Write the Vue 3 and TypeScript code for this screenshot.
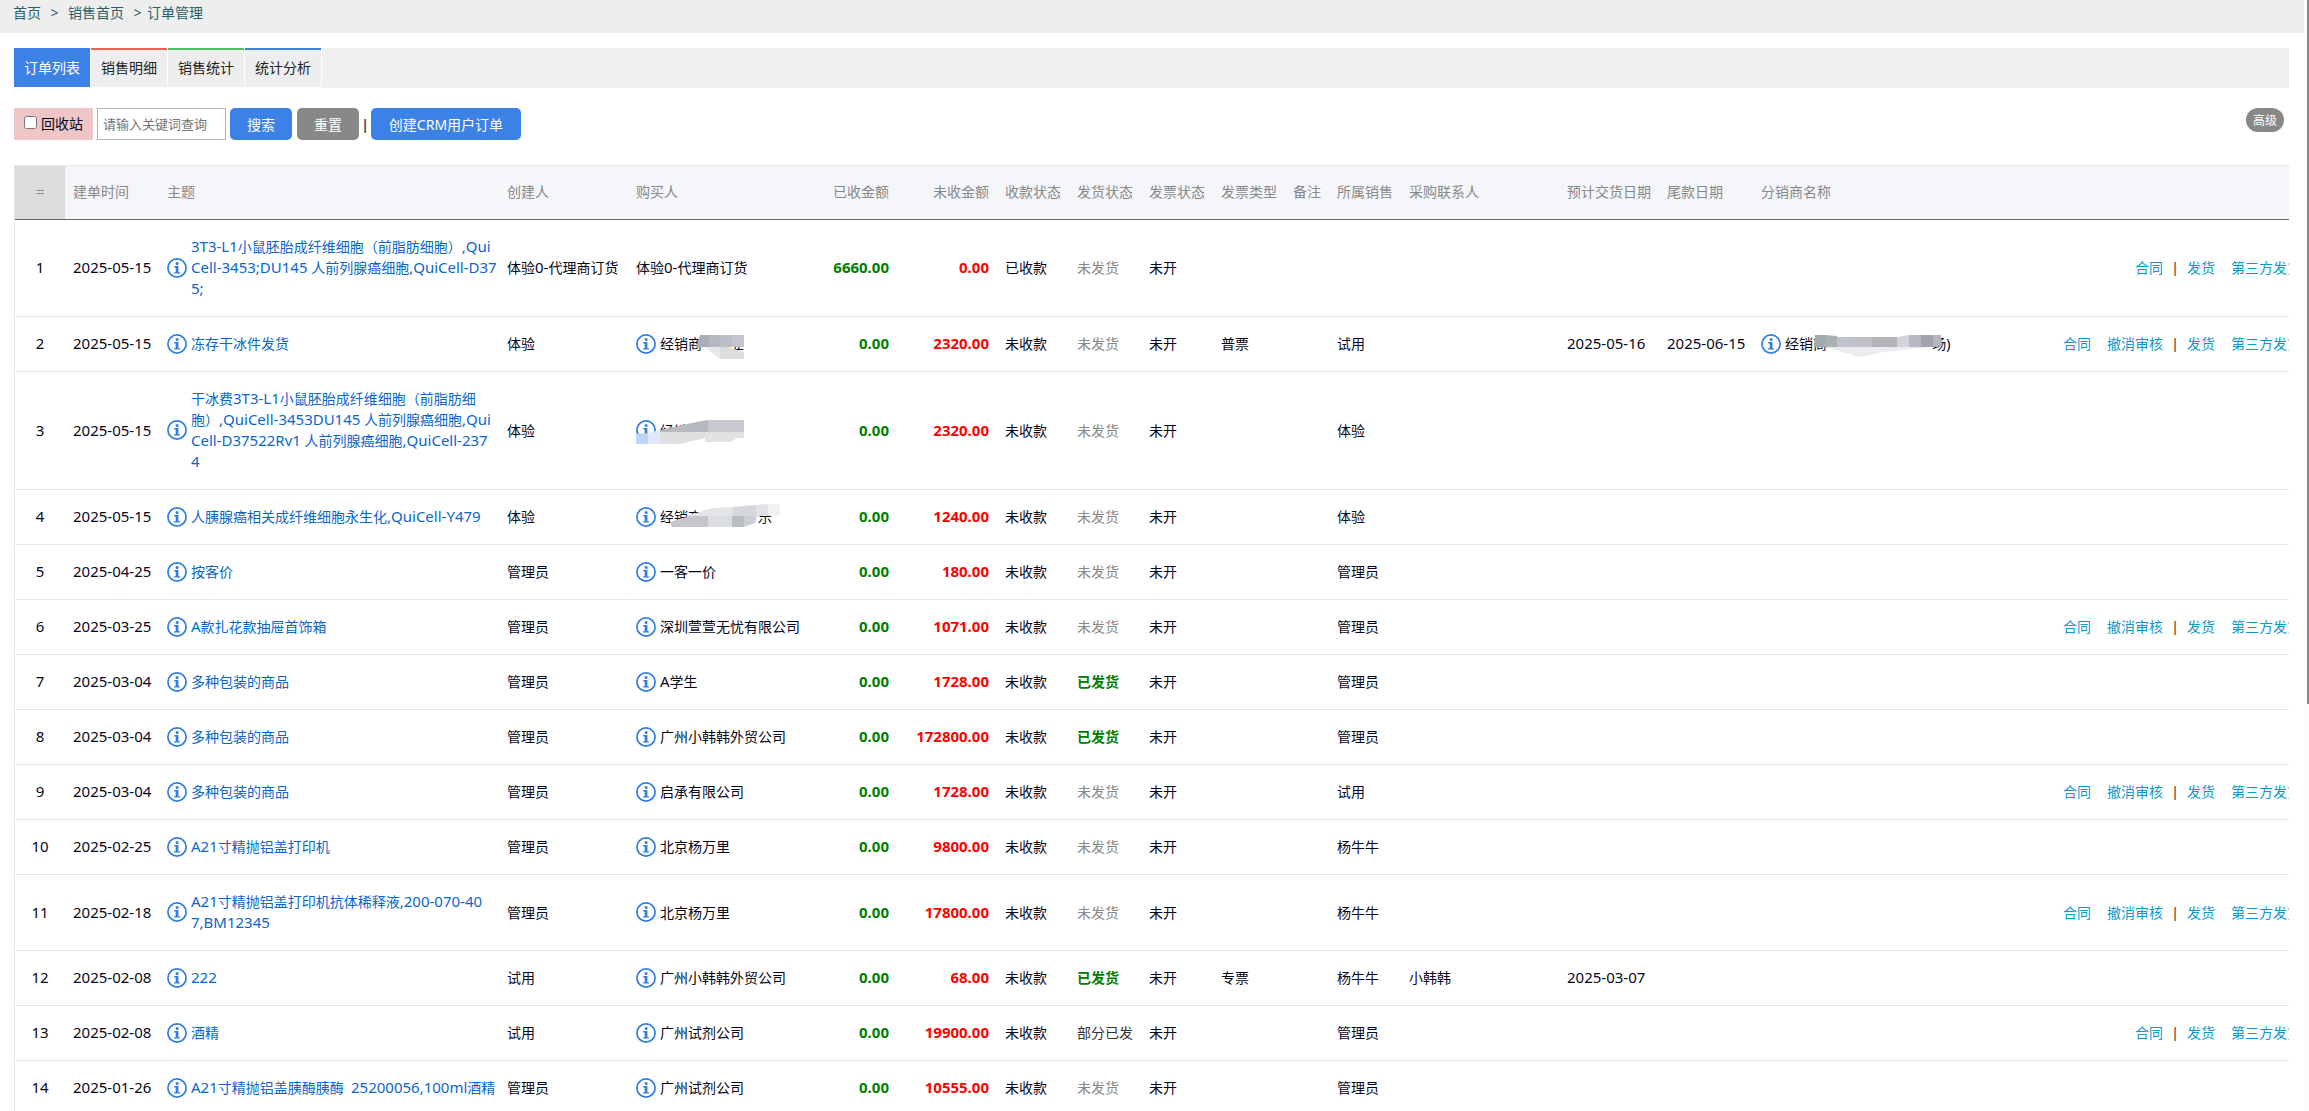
<script setup lang="ts">
import { defineComponent, h, ref } from 'vue'

interface Shape {
  points: string
  fill: string
}

interface Party {
  name: string
  info: boolean
  mask?: Shape[]
}

interface Order {
  date: string
  subject: string
  creator: string
  buyer: Party
  paid: string
  unpaid: string
  payState: string
  shipState: string
  invoiceType?: string
  sales?: string
  contact?: string
  delivery?: string
  balance?: string
  dealer?: Party
  actions?: string[]
}

const keyword = ref('')
const recycled = ref(false)

const tabs = [
  { label: '订单列表', tone: 'active' },
  { label: '销售明细', tone: 'red' },
  { label: '销售统计', tone: 'green' },
  { label: '统计分析', tone: 'blue' },
]

const columns = [
  { key: 'index', label: '=' },
  { key: 'date', label: '建单时间' },
  { key: 'subject', label: '主题' },
  { key: 'creator', label: '创建人' },
  { key: 'buyer', label: '购买人' },
  { key: 'money', label: '已收金额' },
  { key: 'money', label: '未收金额' },
  { key: 'state', label: '收款状态' },
  { key: 'state', label: '发货状态' },
  { key: 'state', label: '发票状态' },
  { key: 'state', label: '发票类型' },
  { key: 'note', label: '备注' },
  { key: 'state', label: '所属销售' },
  { key: 'contact', label: '采购联系人' },
  { key: 'delivery', label: '预计交货日期' },
  { key: 'date', label: '尾款日期' },
  { key: 'dealer', label: '分销商名称' },
  { key: 'actions', label: '' },
]

const short = ['合同', '|', '发货', '第三方发货']
const full = ['合同', '撤消审核', '|', '发货', '第三方发货']

const party = (name: string, mask?: Shape[]): Party => ({ name, info: true, mask })

const buyerMask2: Shape[] = [
  { points: '64,2 73,2 73,14 60,14', fill: '#a9aeb8' },
  { points: '73,2 84,2 84,14 73,14', fill: '#b6b8c0' },
  { points: '84,2 96,2 96,14 84,14', fill: '#bcbec6' },
  { points: '96,2 108,2 108,14 96,14', fill: '#c5c6cd' },
  { points: '69,14 84,14 84,26', fill: '#e8e8ea' },
  { points: '84,14 92,14 108,19 108,26 84,26', fill: '#dcdddf' },
]
const buyerMask3: Shape[] = [
  { points: '0,14 12,13 12,24 0,24', fill: '#bcd5f7' },
  { points: '12,13 24,10 24,24 12,24', fill: '#dde9fa' },
  { points: '24,10 60,2 60,12 24,12', fill: '#b9bac0' },
  { points: '60,2 72,0 72,12 60,12', fill: '#b3b8c1' },
  { points: '72,0 108,0 108,12 72,12', fill: '#c9cad0' },
  { points: '24,12 72,12 69,18 44,24 24,24', fill: '#dfdfe2' },
  { points: '69,12 108,12 108,18 101,18 94,22 69,22', fill: '#e2e2e5' },
]
const buyerMask4: Shape[] = [
  { points: '50,10 77,2 97,1 97,10', fill: '#e4e5e8' },
  { points: '97,1 120,-1 120,10 97,10', fill: '#d5d7db' },
  { points: '120,-1 132,-2 132,10 120,10', fill: '#e1e2e5' },
  { points: '132,-2 144,-2 144,10 132,10', fill: '#f2f2f4' },
  { points: '34,16 54,10 72,10 72,21 36,21', fill: '#c5c6cb' },
  { points: '72,10 96,10 96,21 72,21', fill: '#dcdde0' },
  { points: '96,10 108,10 108,21 96,21', fill: '#b8bcc4' },
  { points: '108,10 121,10 119,17 108,21', fill: '#cdced3' },
]
const dealerMask: Shape[] = [
  { points: '54,2 64,2 64,14 53,14', fill: '#a5a8ac' },
  { points: '64,2 76,3 76,14 64,14', fill: '#adb0b3' },
  { points: '76,4 88,4 88,14 76,14', fill: '#bfc4cd' },
  { points: '88,4 111,4 111,14 88,14', fill: '#bfc0c7' },
  { points: '111,4 136,4 136,14 111,14', fill: '#b2b3b8' },
  { points: '136,4 148,2 148,14 136,14', fill: '#d3d4d8' },
  { points: '148,2 160,2 160,14 148,14', fill: '#b5b8c1' },
  { points: '160,2 172,2 172,14 160,14', fill: '#a1a4ad' },
  { points: '172,2 180,2 181,12 176,14 172,14', fill: '#b5b6ba' },
  { points: '64,14 169,14 123,19 101,24 94,23 79,18', fill: '#ececee' },
]

const orders: Order[] = [
  { date: '2025-05-15', subject: '3T3-L1小鼠胚胎成纤维细胞（前脂肪细胞）,Qui\nCell-3453;DU145 人前列腺癌细胞,QuiCell-D37\n5;', creator: '体验0-代理商订货', buyer: { name: '体验0-代理商订货', info: false }, paid: '6660.00', unpaid: '0.00', payState: '已收款', shipState: '未发货', actions: short },
  { date: '2025-05-15', subject: '冻存干冰件发货', creator: '体验', buyer: party('经销商\u3000\u3000业', buyerMask2), paid: '0.00', unpaid: '2320.00', payState: '未收款', shipState: '未发货', invoiceType: '普票', sales: '试用', delivery: '2025-05-16', balance: '2025-06-15', dealer: party('经销商\u3000\u3000\u3000\u3000\u3000\u3000\u3000  场)', dealerMask), actions: full },
  { date: '2025-05-15', subject: '干冰费3T3-L1小鼠胚胎成纤维细胞（前脂肪细\n胞）,QuiCell-3453DU145 人前列腺癌细胞,Qui\nCell-D37522Rv1 人前列腺癌细胞,QuiCell-237\n4', creator: '体验', buyer: party('经销', buyerMask3), paid: '0.00', unpaid: '2320.00', payState: '未收款', shipState: '未发货', sales: '体验' },
  { date: '2025-05-15', subject: '人胰腺癌相关成纤维细胞永生化,QuiCell-Y479', creator: '体验', buyer: party('经销商长\u3000\u3000\u3000乐', buyerMask4), paid: '0.00', unpaid: '1240.00', payState: '未收款', shipState: '未发货', sales: '体验' },
  { date: '2025-04-25', subject: '按客价', creator: '管理员', buyer: party('一客一价'), paid: '0.00', unpaid: '180.00', payState: '未收款', shipState: '未发货', sales: '管理员' },
  { date: '2025-03-25', subject: 'A款扎花款抽屉首饰箱', creator: '管理员', buyer: party('深圳萱萱无忧有限公司'), paid: '0.00', unpaid: '1071.00', payState: '未收款', shipState: '未发货', sales: '管理员', actions: full },
  { date: '2025-03-04', subject: '多种包装的商品', creator: '管理员', buyer: party('A学生'), paid: '0.00', unpaid: '1728.00', payState: '未收款', shipState: '已发货', sales: '管理员' },
  { date: '2025-03-04', subject: '多种包装的商品', creator: '管理员', buyer: party('广州小韩韩外贸公司'), paid: '0.00', unpaid: '172800.00', payState: '未收款', shipState: '已发货', sales: '管理员' },
  { date: '2025-03-04', subject: '多种包装的商品', creator: '管理员', buyer: party('启承有限公司'), paid: '0.00', unpaid: '1728.00', payState: '未收款', shipState: '未发货', sales: '试用', actions: full },
  { date: '2025-02-25', subject: 'A21寸精抛铝盖打印机', creator: '管理员', buyer: party('北京杨万里'), paid: '0.00', unpaid: '9800.00', payState: '未收款', shipState: '未发货', sales: '杨牛牛' },
  { date: '2025-02-18', subject: 'A21寸精抛铝盖打印机抗体稀释液,200-070-40\n7,BM12345', creator: '管理员', buyer: party('北京杨万里'), paid: '0.00', unpaid: '17800.00', payState: '未收款', shipState: '未发货', sales: '杨牛牛', actions: full },
  { date: '2025-02-08', subject: '222', creator: '试用', buyer: party('广州小韩韩外贸公司'), paid: '0.00', unpaid: '68.00', payState: '未收款', shipState: '已发货', invoiceType: '专票', sales: '杨牛牛', contact: '小韩韩', delivery: '2025-03-07' },
  { date: '2025-02-08', subject: '酒精', creator: '试用', buyer: party('广州试剂公司'), paid: '0.00', unpaid: '19900.00', payState: '未收款', shipState: '部分已发', sales: '管理员', actions: short },
  { date: '2025-01-26', subject: 'A21寸精抛铝盖胰酶胰酶  25200056,100ml酒精', creator: '管理员', buyer: party('广州试剂公司'), paid: '0.00', unpaid: '10555.00', payState: '未收款', shipState: '未发货', sales: '管理员' },
]

const shipTone: Record<string, string> = { 未发货: 'muted', 已发货: 'shipped', 部分已发: 'partial' }

// Latin runs are set one pixel larger than the Chinese text around them.
const splitRuns = (text: string) =>
  text.split(/([A-Za-z0-9\-,;.]+)/).filter(Boolean).map((run) => ({
    run,
    latin: /^[A-Za-z0-9\-,;.]+$/.test(run),
  }))

const InfoIcon = defineComponent({
  render: () =>
    h('svg', { width: 20, height: 20, viewBox: '0 0 20 20', 'aria-hidden': 'true' }, [
      h('circle', { cx: 10, cy: 10, r: 9.1, fill: 'none', stroke: '#2f7de1', 'stroke-width': 1.7 }),
      h('circle', { cx: 10.1, cy: 5.4, r: 1.5, fill: '#2f7de1' }),
      h('path', { d: 'M7.2 8.1h4.2v6.2h1.5v1.3H7.1v-1.3h1.6V9.4H7.2z', fill: '#2f7de1' }),
    ]),
})
</script>

<template>
  <div class="page">
    <nav class="crumbs" aria-label="breadcrumb">
      <a href="#">首页</a><i>&gt;</i><a href="#">销售首页</a><i class="last">&gt;</i><a href="#">订单管理</a>
    </nav>

    <main class="content">
      <nav class="tabs">
        <a v-for="tab in tabs" :key="tab.label" href="#" class="tab" :class="tab.tone">{{ tab.label }}</a>
      </nav>

      <form class="toolbar" @submit.prevent>
        <label class="recycle"><input v-model="recycled" type="checkbox" />回收站</label>
        <input v-model="keyword" class="keyword" type="text" placeholder="请输入关键词查询" aria-label="关键词" />
        <button type="submit" class="btn search">搜索</button>
        <button type="button" class="btn reset" @click="keyword = ''">重置</button>
        <span class="bar">|</span>
        <button type="button" class="btn create">创建CRM用户订单</button>
        <button type="button" class="advanced">高级</button>
      </form>

      <div class="grid">
        <table>
          <colgroup>
            <col v-for="(c, i) in columns" :key="i" :class="'w-' + c.key" />
          </colgroup>
          <thead>
            <tr>
              <th v-for="(c, i) in columns" :key="i" :class="{ index: c.key === 'index', money: c.key === 'money' }">{{ c.label }}</th>
            </tr>
          </thead>
          <tbody>
            <tr v-for="(o, i) in orders" :key="i">
              <td class="index latin">{{ i + 1 }}</td>
              <td class="latin">{{ o.date }}</td>
              <td>
                <div class="named">
                  <InfoIcon class="icon" />
                  <a href="#" class="subject"><span v-for="(r, k) in splitRuns(o.subject)" :key="k" :class="{ latin: r.latin }">{{ r.run }}</span></a>
                </div>
              </td>
              <td><span v-for="(r, k) in splitRuns(o.creator)" :key="k" :class="{ latin: r.latin }">{{ r.run }}</span></td>
              <td>
                <div class="named">
                  <InfoIcon v-if="o.buyer.info" class="icon" />
                  <span class="name"><span v-for="(r, k) in splitRuns(o.buyer.name)" :key="k" :class="{ latin: r.latin }">{{ r.run }}</span></span>
                  <svg v-if="o.buyer.mask" class="mask" aria-hidden="true">
                    <polygon v-for="(s, k) in o.buyer.mask" :key="k" :points="s.points" :fill="s.fill" />
                  </svg>
                </div>
              </td>
              <td class="money paid latin">{{ o.paid }}</td>
              <td class="money unpaid latin">{{ o.unpaid }}</td>
              <td>{{ o.payState }}</td>
              <td :class="shipTone[o.shipState]">{{ o.shipState }}</td>
              <td>未开</td>
              <td>{{ o.invoiceType }}</td>
              <td></td>
              <td>{{ o.sales }}</td>
              <td>{{ o.contact }}</td>
              <td class="latin">{{ o.delivery }}</td>
              <td class="latin">{{ o.balance }}</td>
              <td>
                <div v-if="o.dealer" class="named">
                  <InfoIcon class="icon" />
                  <span class="name">{{ o.dealer.name }}</span>
                  <svg class="mask" aria-hidden="true">
                    <polygon v-for="(s, k) in o.dealer.mask" :key="k" :points="s.points" :fill="s.fill" />
                  </svg>
                </div>
              </td>
              <td class="ops">
                <div v-if="o.actions" class="actions">
                  <template v-for="(a, k) in o.actions" :key="k">
                    <span v-if="a === '|'" class="bar">|</span>
                    <a v-else href="#">{{ a }}</a>
                  </template>
                </div>
              </td>
            </tr>
          </tbody>
        </table>
      </div>
    </main>

    <div class="scroll" aria-hidden="true"><div class="thumb"></div></div>
  </div>
</template>

<style>
body {
  margin: 0;
  background: #fff;
}
</style>

<style scoped>
.page {
  height: 100vh;
  overflow: hidden;
  color: #06061a;
  font: 14px/21px 'Noto Sans', 'Noto Sans CJK SC', sans-serif;
}
.page * {
  box-sizing: border-box;
}
a {
  text-decoration: none;
}
button,
input {
  font-family: inherit;
}
.latin {
  font-size: 15px;
}
span.latin {
  line-height: 16px;
}

.crumbs {
  display: flex;
  height: 33px;
  padding: 2px 13px;
  background: #eee;
}
.crumbs a,
.crumbs i {
  color: #2b5f66;
  font-style: normal;
}
.crumbs i {
  width: 27px;
  text-align: center;
}
.crumbs i.last {
  width: 23px;
  padding-left: 4px;
}

.content {
  padding: 15px 20px 0 14px;
}
.tabs {
  display: flex;
  height: 40px;
  background: #f0f0f0;
}
.tab {
  height: 39px;
  margin-right: 1px;
  padding: 7px 10px 0;
  border-top: 2px solid #3c82e6;
  background: #eee;
  box-shadow: 1px 0 #fff, 0 1px #fff;
  color: #222;
}
.tab.active {
  background: #3c82e6;
  color: #fff;
}
.tab.red {
  border-color: #e66454;
}
.tab.green {
  border-color: #56bf6a;
}
.tab.blue {
  border-color: #4382cf;
}

.toolbar {
  display: flex;
  align-items: flex-start;
  margin-top: 20px;
}
.recycle {
  display: flex;
  align-items: center;
  height: 32px;
  padding: 0 10px 2px;
  margin-right: 4px;
  background: #efc5c5;
}
.recycle input {
  width: 13px;
  height: 13px;
  margin: 0 4px 1px 0;
}
.keyword {
  width: 129px;
  height: 32px;
  padding: 0 5px;
  margin-right: 4px;
  border: 1px solid #b4b4b4;
  font-size: 13px;
}
.keyword::placeholder {
  color: #757575;
}
.btn {
  width: 62px;
  height: 32px;
  padding: 0;
  margin-right: 5px;
  border: 0;
  border-radius: 5px;
  background: #3c82e6;
  color: #fff;
  font-size: 14px;
}
.btn.reset {
  margin-right: 2px;
  background: #888;
}
.btn.create {
  width: 150px;
}
.bar {
  width: 8px;
  text-align: center;
  font-weight: 700;
}
.toolbar .bar {
  margin-right: 2px;
  padding-top: 6px;
  color: #3f4a4f;
}
.advanced {
  width: 38px;
  height: 24px;
  margin: 0 5px 0 auto;
  padding: 0 0 1px;
  border: 0;
  border-radius: 12px;
  background: #888;
  color: #fff;
  font-size: 12px;
}

.grid {
  margin-top: 25px;
  border: solid #e6e7ea;
  border-width: 1px 0 0 1px;
  overflow: hidden;
}
table {
  width: calc(100% + 20px);
  table-layout: fixed;
  border-spacing: 0;
}
.w-index { width: 50px; }
.w-date { width: 94px; }
.w-subject { width: 340px; }
.w-creator { width: 129px; }
.w-buyer { width: 169px; }
.w-money { width: 100px; }
.w-state { width: 72px; }
.w-note { width: 44px; }
.w-contact { width: 158px; }
.w-delivery { width: 100px; }
.w-dealer { width: 207px; }
th {
  height: 54px;
  padding: 0 8px 2px;
  border-bottom: 1px solid #666;
  background: #f4f6fa;
  color: #888;
  font-weight: 400;
  text-align: left;
  white-space: nowrap;
}
td {
  height: 55px;
  padding: 16px 8px 17px;
  border-bottom: 1px solid #e8e8e8;
  white-space: nowrap;
}
th.index,
td.index {
  text-align: center;
}
th.index {
  background: #ddd;
  font-size: 15px;
}
th.money,
td.money {
  text-align: right;
}
td.money {
  font-weight: 700;
}
.paid {
  color: #008000;
}
.unpaid {
  color: #f00;
}
.muted {
  color: #888;
}
.shipped {
  color: #008000;
  font-weight: 700;
}
.partial {
  color: #333;
}
.named {
  display: flex;
  align-items: center;
  gap: 4px;
  position: relative;
}
.icon {
  flex: none;
}
.subject {
  color: #0a66cc;
  white-space: pre;
}
.name {
  white-space: pre;
}
.mask {
  position: absolute;
  left: 0;
  top: 0;
  width: 184px;
  height: 21px;
  overflow: visible;
}
.ops {
  padding-right: 0;
}
.actions {
  display: flex;
  justify-content: flex-end;
}
.actions a {
  padding: 0 8px;
  color: #0d99cc;
}
.actions .bar {
  color: #a0602c;
}

.scroll {
  position: fixed;
  top: 0;
  right: 0;
  bottom: 0;
  width: 5px;
  background: #fbfbfb;
}
.thumb {
  width: 2px;
  height: 63.4%;
  margin-left: auto;
  background: #888;
}
</style>
